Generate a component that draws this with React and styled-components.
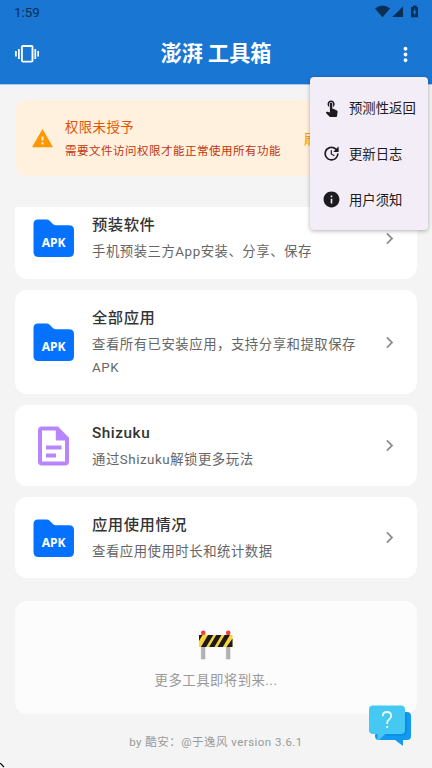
import React, { useState } from 'react';
import styled, { createGlobalStyle } from 'styled-components';
import { MdMoreVert, MdWarning, MdTouchApp, MdUpdate, MdInfo, MdChevronRight } from 'react-icons/md';

const GlobalStyle = createGlobalStyle`
  * {
    box-sizing: border-box;
  }

  body {
    margin: 0;
    background: #f4f4f4;
    font-family: Roboto, 'Noto Sans CJK SC', sans-serif;
  }

  button {
    background: none;
    border: none;
    padding: 0;
    font-family: inherit;
    cursor: pointer;
  }
`;

const Screen = styled.div`
  position: relative;
  display: flex;
  flex-direction: column;
  width: 432px;
  height: 768px;
  overflow: hidden;
  background: #f4f4f4;
`;

const Header = styled.header`
  height: 84px;
  flex-shrink: 0;
  background: #1976d2;
  color: white;
  box-shadow: 0 1px 0 rgba(25, 118, 210, 0.35);
`;

const StatusBar = styled.div`
  display: flex;
  justify-content: space-between;
  height: 24px;
  padding: 5px 13px 0 14px;
  font-size: 13.4px;
  line-height: 16px;
  color: #0b2f54;
`;

const StatusIcons = styled.svg`
  display: block;
  width: 44px;
  height: 13px;
`;

const AppBar = styled.div`
  display: grid;
  grid-template-columns: 54px 1fr 54px;
  align-items: center;
  height: 60px;
`;

const IconButton = styled.button`
  display: flex;
  align-items: center;
  justify-content: center;
  height: 48px;
  color: white;
`;

const AppTitle = styled.h1`
  margin: 0;
  text-align: center;
  font-size: 21.1px;
  font-weight: 700;
  line-height: 30px;
`;

const Banner = styled.section`
  display: flex;
  align-items: center;
  flex-shrink: 0;
  height: 76px;
  margin: 16px 15px 0;
  padding: 0 16px;
  border-radius: 12px;
  background: #fff1de;

  > svg {
    color: #ff9800;
    flex-shrink: 0;
  }
`;

const BannerText = styled.div`
  flex: 1;
  margin-left: 11px;
  white-space: nowrap;
`;

const BannerTitle = styled.div`
  font-size: 13.35px;
  line-height: 23px;
  letter-spacing: 0.45px;
  color: #e65100;
`;

const BannerNote = styled.div`
  margin-top: 2px;
  font-size: 11.5px;
  line-height: 20px;
  letter-spacing: 0.5px;
  color: #bf360c;
`;

const RefreshButton = styled.button`
  width: 97px;
  text-align: left;
  font-size: 13.35px;
  color: #ff9800;
`;

// First card is scrolled partly under the top edge
const ToolList = styled.main`
  display: flex;
  flex-direction: column;
  justify-content: flex-end;
  gap: 11.5px;
  flex-shrink: 0;
  height: 371px;
  margin: 31px 15px 0;
  overflow: hidden;
`;

const Card = styled.article`
  display: flex;
  align-items: center;
  flex-shrink: 0;
  min-height: 80.7px;
  padding: 15.6px 16px 15px 15px;
  border-radius: 12px;
  background: white;
  color: #919191;
`;

const CardIcon = styled.svg`
  display: block;
  width: 46px;
  height: 46px;
  flex-shrink: 0;
  font-family: 'Noto Sans', sans-serif;
`;

const CardText = styled.div`
  flex: 1;
  margin-left: 16px;
`;

const CardTitle = styled.div`
  font-size: 15.3px;
  font-weight: 500;
  line-height: 24px;
  letter-spacing: 0.55px;
  color: #333;
`;

const CardNote = styled.div`
  margin-top: 3px;
  padding-right: 10px;
  font-size: 13.38px;
  line-height: 23px;
  letter-spacing: 0.52px;
  color: #666;
`;

const MoreCard = styled.section`
  display: flex;
  flex-direction: column;
  align-items: center;
  flex-shrink: 0;
  height: 113px;
  margin: 23px 15px 0;
  padding-top: 29px;
  border-radius: 12px;
  background: #fcfcfc;
`;

const MoreText = styled.div`
  margin-top: 10px;
  font-size: 13.35px;
  line-height: 22px;
  letter-spacing: 0.5px;
  color: #999;
`;

const Footer = styled.footer`
  margin-top: 18px;
  text-align: center;
  font-size: 11.5px;
  line-height: 20px;
  letter-spacing: 0.47px;
  color: #999;
`;

const Menu = styled.div`
  position: absolute;
  top: 77px;
  right: 4px;
  z-index: 10;
  display: flex;
  flex-direction: column;
  width: 118px;
  height: 153px;
  padding-top: 8px;
  border-radius: 4px;
  background: #f3edf7;
  box-shadow: 0 1px 4px rgba(0, 0, 0, 0.3);
`;

const MenuItem = styled.button`
  display: flex;
  align-items: center;
  gap: 8px;
  height: 46px;
  padding: 0 0 1px 12px;
  font-size: 13.35px;
  white-space: nowrap;
  color: #1d1b20;
`;

const HelpButton = styled.button`
  position: absolute;
  top: 704px;
  left: 367px;
  width: 46px;
  height: 44px;
`;

const Cursor = styled.svg`
  position: absolute;
  left: 0;
  bottom: 0;
`;

const VibrateIcon = () => (
  <svg width="24" height="20" viewBox="0 0 24 20">
    <rect x="6.900" y="2" width="10.600" height="15.600" rx="1" fill="none" stroke="currentColor" strokeWidth="1.900" />
    <path d="M.9 7v5.500M3.900 4.900v10M20.300 4.900v10M23.200 7v5.500" stroke="currentColor" strokeWidth="1.700" />
  </svg>
);

const ApkIcon = () => (
  <CardIcon viewBox="0 0 46 46">
    <path
      d="M8 4.500h8.500q2 0 3.400 1.400l3 3q1.300 1.300 3 1.300H39q5 0 5 5V37q0 5-5 5H8.500q-5 0-5-5V9Q3.500 4.500 8 4.500z"
      fill="#0572ff"
    />
    <text x="23.700" y="31.500" textAnchor="middle" fontSize="12.100" fontWeight="700" fill="white">APK</text>
  </CardIcon>
);

const DocIcon = () => (
  <CardIcon viewBox="0 0 46 46">
    <path
      fillRule="evenodd"
      d="M12 3.500h16L39 14.700V38.500q0 4-4 4H12q-4 0-4-4V7.500q0-4 4-4zm0 4V38.500h23V17.500h-9.200V7.500z"
      fill="#b985fa"
    />
    <path d="M16 24.500h15.500M16 32.500h10" stroke="#b985fa" strokeWidth="4" />
  </CardIcon>
);

const BarrierIcon = () => (
  <svg width="36" height="30" viewBox="0 0 36 30">
    <path d="M3.300 4h3.700v25H3.300zM28.300 4H32v25h-3.700z" fill="#b3b3b3" stroke="#999" strokeWidth=".4" />
    <circle cx="5.200" cy="2.800" r="2.300" fill="#f44336" />
    <circle cx="30.200" cy="2.800" r="2.300" fill="#f44336" />
    <rect x="1" y="5" width="33.500" height="12" fill="#fdd33b" />
    <path
      d="M1 5h3.500L1 11zM10 5h5.300L8.200 17H2.900zM18.200 5h5.300l-7.100 12h-5.300zM26.600 5h5.300l-7.100 12h-5.300zM34.500 8.500V17h-6z"
      fill="#1b1b1b"
    />
  </svg>
);

const HelpIcon = () => (
  <svg width="46" height="44" viewBox="0 0 46 44">
    <path
      d="M11 8h29q4 0 4 4v20q0 4-4 4h-4v5q0 1-1 .3L28 36H12q-4 0-4-4z"
      fill="#129af3"
    />
    <path
      d="M6 1.500h28q4 0 4 4V26q0 4-4 4H18l-5.500 5.500Q10.500 37 10.500 34v-4H6q-4 0-4-4V5.500q0-4 4-4z"
      fill="#45c8f1"
    />
    <path d="M19 31h16q4 0 4-5V9" stroke="#0b86dc" strokeWidth="1.600" fill="none" opacity=".7" />
    <path
      d="M15.800 12.200q0-4.200 4.200-4.200t4.200 4c0 3.500-4 3.500-4 6.500v1.500M20.200 22v2"
      fill="none"
      stroke="#eafaff"
      strokeWidth="1.800"
    />
  </svg>
);

const tools = [
  { title: '预装软件', note: '手机预装三方App安装、分享、保存', icon: ApkIcon },
  { title: '全部应用', note: '查看所有已安装应用，支持分享和提取保存APK', icon: ApkIcon },
  { title: 'Shizuku', note: '通过Shizuku解锁更多玩法', icon: DocIcon },
  { title: '应用使用情况', note: '查看应用使用时长和统计数据', icon: ApkIcon },
];

const App = () => {
  const [menuOpen, setMenuOpen] = useState(true);

  return (
    <>
      <GlobalStyle />
      <Screen>
        <Header>
          <StatusBar>
            <span>1:59</span>
            <StatusIcons viewBox="0 0 44 13">
              <path d="M0 3.500Q7.500-2.500 15 3.500L7.500 12.300z" fill="currentColor" />
              <path d="M28 1.500V12H17.300z" fill="currentColor" />
              <path d="M38 .5h3.500V2H43v10.200h-7V2h2z" fill="currentColor" />
              <path d="M40.300 3.300l-2.600 4.400h1.500v3l2.500-4.300h-1.400z" fill="#1976d2" />
            </StatusIcons>
          </StatusBar>
          <AppBar>
            <IconButton>
              <VibrateIcon />
            </IconButton>
            <AppTitle>澎湃 工具箱</AppTitle>
            <IconButton onClick={() => setMenuOpen(!menuOpen)}>
              <MdMoreVert size={23} />
            </IconButton>
          </AppBar>
        </Header>

        <Banner>
          <MdWarning size={23} />
          <BannerText>
            <BannerTitle>权限未授予</BannerTitle>
            <BannerNote>需要文件访问权限才能正常使用所有功能</BannerNote>
          </BannerText>
          <RefreshButton>刷新</RefreshButton>
        </Banner>

        <ToolList>
          {tools.map(({ title, note, icon: Icon }) => (
            <Card key={title}>
              <Icon />
              <CardText>
                <CardTitle>{title}</CardTitle>
                <CardNote>{note}</CardNote>
              </CardText>
              <MdChevronRight size={23} />
            </Card>
          ))}
        </ToolList>

        <MoreCard>
          <BarrierIcon />
          <MoreText>更多工具即将到来...</MoreText>
        </MoreCard>
        <Footer>by 酷安：@于逸风 version 3.6.1</Footer>

        {menuOpen && (
          <Menu>
            <MenuItem>
              <MdTouchApp size={19} />
              预测性返回
            </MenuItem>
            <MenuItem>
              <MdUpdate size={19} />
              更新日志
            </MenuItem>
            <MenuItem>
              <MdInfo size={19} />
              用户须知
            </MenuItem>
          </Menu>
        )}

        <HelpButton>
          <HelpIcon />
        </HelpButton>

        <Cursor width="6" height="5" viewBox="0 0 6 5">
          <path d="M0 0l4 4" stroke="black" strokeWidth="1.200" />
        </Cursor>
      </Screen>
    </>
  );
};

export default App;
